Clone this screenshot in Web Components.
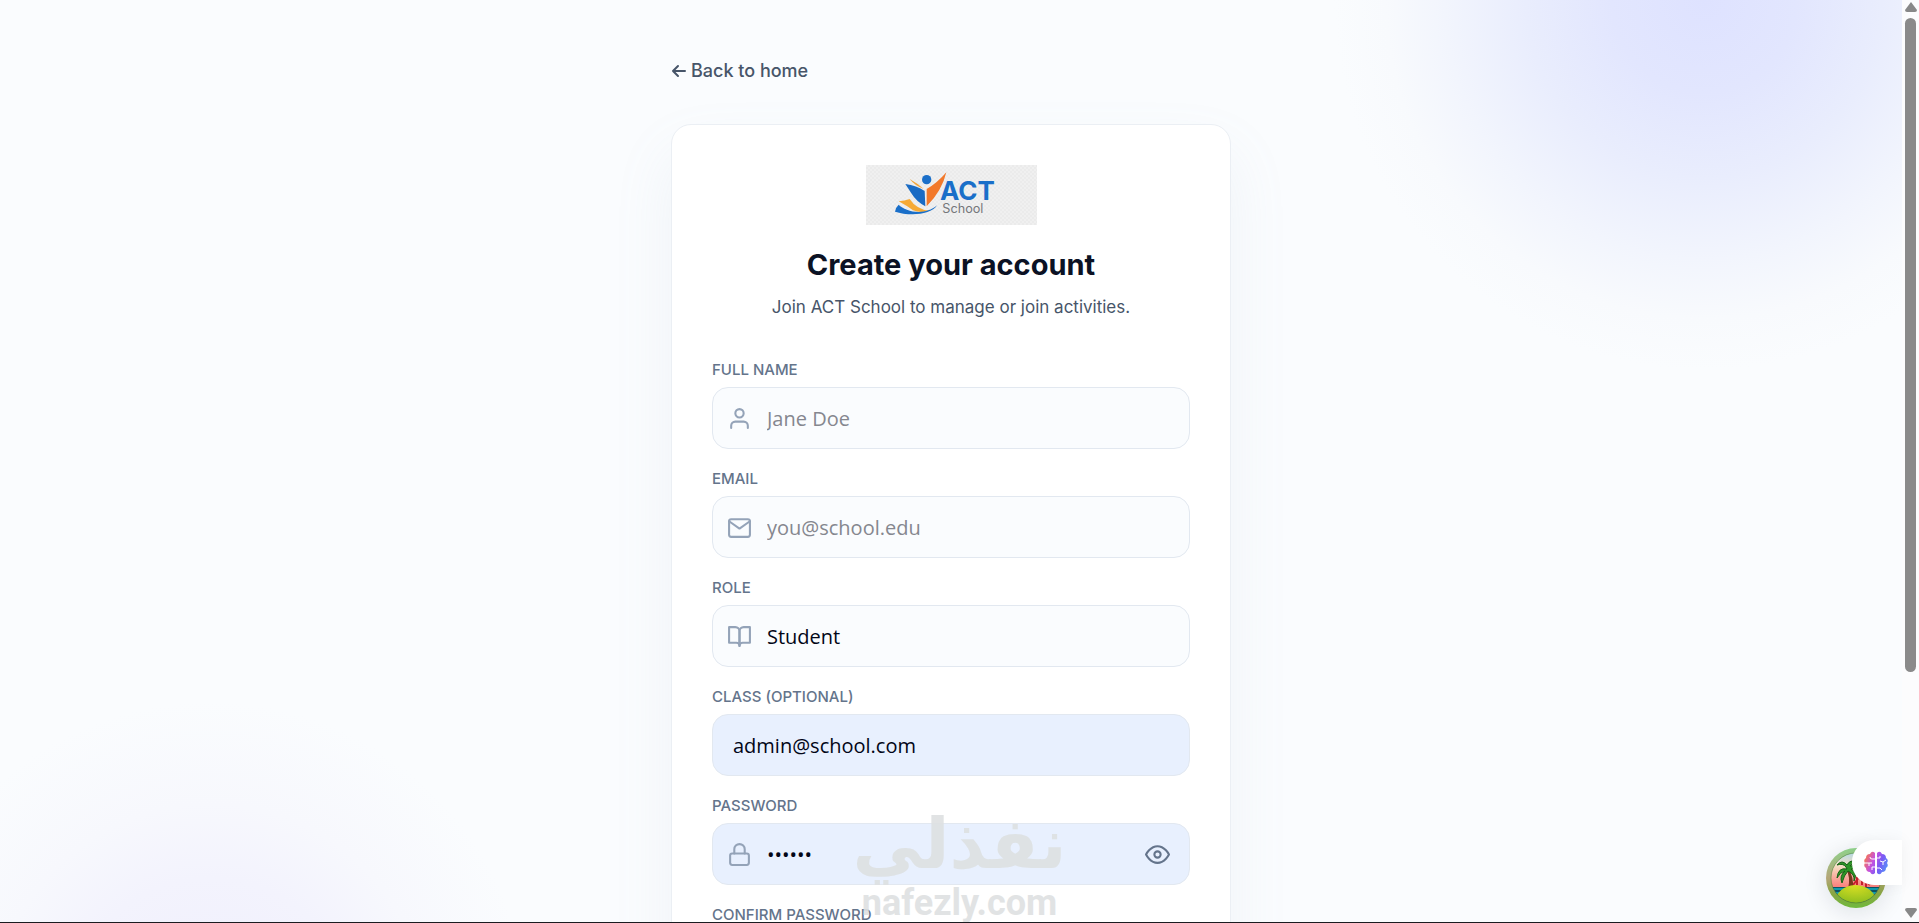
<!DOCTYPE html>
<html lang="en">
<head>
  <meta charset="utf-8">
  <meta name="viewport" content="width=device-width, initial-scale=1">
  <title>ACT School - Create your account</title>
  <style>
    body {
      margin: 0;
      font-family: Inter, "Open Sans", sans-serif;
      color: #0b1224;
    }
  </style>
</head>
<body>
  <app-shell>
    <back-link href="#home">Back to home</back-link>
    <auth-card>
      <school-logo slot="logo"></school-logo>
      <span slot="title">Create your account</span>
      <span slot="subtitle">Join ACT School to manage or join activities.</span>

      <form-field label="Full name" name="name" placeholder="Jane Doe">
        <field-icon slot="icon" name="user"></field-icon>
      </form-field>
      <form-field label="Email" name="email" type="email" placeholder="you@school.edu">
        <field-icon slot="icon" name="mail"></field-icon>
      </form-field>
      <form-field label="Role" name="role" type="select" options="Student,Teacher">
        <field-icon slot="icon" name="book"></field-icon>
      </form-field>
      <form-field label="Class (optional)" name="class" value="admin@school.com" filled></form-field>
      <form-field label="Password" name="password" type="password" value="secret" filled>
        <field-icon slot="icon" name="lock"></field-icon>
      </form-field>
      <form-field label="Confirm password" name="confirm" type="password">
        <field-icon slot="icon" name="lock"></field-icon>
      </form-field>
    </auth-card>

    <water-mark slot="overlay"></water-mark>
    <assistant-dock slot="overlay"></assistant-dock>
  </app-shell>

  <script>
    class AppShell extends HTMLElement {
      constructor() {
        super();
        this.attachShadow({ mode: 'open' });
        this.shadowRoot.innerHTML = `
          <style>
            :host {
              display: grid;
              grid-template-columns: minmax(0, 1fr) 17px;
              box-sizing: border-box;
              height: 100vh;
              border-bottom: 1px solid #1b1b20;
              position: relative;
              overflow: hidden;
              background: #fafcfe;
            }

            main {
              overflow-y: auto;
              scrollbar-width: none;
              background:
                radial-gradient(circle 370px at calc(100% - 198px) 0, #dee2ff 0%, #e2e6fe 25%, #e9edfd 48%, #f2f5fd 70%, #f8fafd 86%, rgba(250, 252, 254, 0) 100%),
                radial-gradient(circle 320px at 210px calc(100% + 100px), #efeefc 0%, #f3f3fd 45%, #f7f8fd 68%, rgba(250, 252, 254, 0) 100%);
            }

            .column {
              display: flex;
              flex-direction: column;
              gap: 40px;
              max-width: 560px;
              margin: 0 auto;
              padding: 58px 20px;
            }

            .scrollbar {
              display: flex;
              flex-direction: column;
              align-items: center;
              justify-content: space-between;
              background: #fcfcfd;
              padding: 2px 0 4px;
            }

            .scrollbar svg {
              width: 12px;
              height: 10px;
              fill: #888;
            }

            .track {
              flex: 1;
              margin: 6px 0;
            }

            .thumb {
              width: 11px;
              height: 74%;
              border-radius: 6px;
              background: #8a8a8a;
            }
          </style>
          <main>
            <div class="column"><slot></slot></div>
          </main>
          <div class="scrollbar" aria-hidden="true">
            <svg viewBox="0 0 12 10"><path d="M6 0 L12 8 Q12 10 10 10 H2 Q0 10 0 8 Z"/></svg>
            <div class="track"><div class="thumb"></div></div>
            <svg viewBox="0 0 12 10"><path d="M6 10 L12 2 Q12 0 10 0 H2 Q0 0 0 2 Z"/></svg>
          </div>
          <slot name="overlay"></slot>
        `;
      }
    }

    class BackLink extends HTMLElement {
      constructor() {
        super();
        this.attachShadow({ mode: 'open' });
        this.shadowRoot.innerHTML = `
          <style>
            :host {
              display: flex;
            }

            a {
              display: flex;
              align-items: center;
              gap: 4px;
              font-size: 18px;
              font-weight: 500;
              line-height: 26px;
              color: #475569;
              text-decoration: none;
            }

            svg {
              width: 16px;
              height: 16px;
              fill: none;
              stroke: currentColor;
              stroke-width: 2;
              stroke-linecap: round;
              stroke-linejoin: round;
            }
          </style>
          <a href="${this.getAttribute('href')}">
            <svg viewBox="0 0 16 16" aria-hidden="true"><path d="M14 8H2M7 3L2 8l5 5"/></svg>
            <slot></slot>
          </a>
        `;
      }
    }

    class SchoolLogo extends HTMLElement {
      constructor() {
        super();
        this.attachShadow({ mode: 'open' });
        this.shadowRoot.innerHTML = `
          <style>
            :host {
              display: block;
              width: 171px;
              height: 60px;
              background: repeating-conic-gradient(#ebebeb 0 25%, #f0f0f0 0 50%) 0 0 / 4px 4px;
            }

            svg {
              display: block;
              width: 100%;
              height: 100%;
            }
          </style>
          <svg viewBox="0 0 513 180" role="img" aria-label="ACT School">
            <circle cx="182" cy="44" r="14" fill="#1a6fc9"/>
            <path d="M241 22 Q228 78 182 124 L182 72 Q214 54 241 22 Z" fill="#f2792b"/>
            <path d="M118 57 Q152 62 176 78 L178 124 Q150 108 137 86 Z" fill="#1a6bc4"/>
            <path d="M131 42 Q156 56 172 71 Q148 63 131 42 Z" fill="#f3a63a"/>
            <path d="M98 109 Q116 108 131 102 Q152 134 190 137 Q164 145 141 136 Q122 122 98 109 Z" fill="#f6aa35"/>
            <path d="M98 119 C118 140 176 154 213 121 C196 150 130 154 87 140 Q88 128 98 119 Z" fill="#1a6fc9"/>
            <text x="222" y="105" font-family="Inter, sans-serif" font-weight="700" font-size="78" fill="#1a6fc9">ACT</text>
            <text x="229" y="145" font-family="Inter, sans-serif" font-size="38" fill="#75777b">School</text>
          </svg>
        `;
      }
    }

    class AuthCard extends HTMLElement {
      constructor() {
        super();
        this.attachShadow({ mode: 'open' });
        this.shadowRoot.innerHTML = `
          <style>
            :host {
              display: block;
              padding: 40px;
              background: #fff;
              border: 1px solid #ebeff4;
              border-radius: 20px;
              box-shadow: 0 30px 60px rgba(148, 163, 184, 0.1);
            }

            header {
              display: flex;
              flex-direction: column;
              align-items: center;
              text-align: center;
              margin-bottom: 39px;
            }

            h1 {
              margin: 20px 0 8px;
              font-size: 29px;
              font-weight: 700;
              line-height: 40px;
            }

            p {
              margin: 0;
              font-size: 17px;
              line-height: 28px;
              color: #475569;
            }

            form {
              display: flex;
              flex-direction: column;
              gap: 20px;
            }
          </style>
          <header>
            <slot name="logo"></slot>
            <h1><slot name="title"></slot></h1>
            <p><slot name="subtitle"></slot></p>
          </header>
          <form><slot></slot></form>
        `;
      }
    }

    const ICONS = {
      user: '<path d="M20 21v-2a4 4 0 0 0-4-4H8a4 4 0 0 0-4 4v2"/><circle cx="12" cy="7" r="4"/>',
      mail: '<rect x="2" y="4" width="20" height="17" rx="2"/><path d="M2 6l10 7 10-7"/>',
      book: '<path d="M2 3h6a4 4 0 0 1 4 4v14a3 3 0 0 0-3-3H2z"/><path d="M22 3h-6a4 4 0 0 0-4 4v14a3 3 0 0 1 3-3h7z"/>',
      lock: '<rect x="3" y="11" width="18" height="11" rx="2"/><path d="M7 11V7a5 5 0 0 1 10 0v4"/>',
      eye: '<path d="M1 12s4-8 11-8 11 8 11 8-4 8-11 8S1 12 1 12z"/><circle cx="12" cy="12" r="3"/>'
    };

    class FieldIcon extends HTMLElement {
      constructor() {
        super();
        this.attachShadow({ mode: 'open' });
        this.shadowRoot.innerHTML = `
          <style>
            :host {
              display: block;
              width: 25px;
              height: 25px;
            }

            svg {
              display: block;
              width: 100%;
              height: 100%;
              fill: none;
              stroke: currentColor;
              stroke-width: 2;
              stroke-linecap: round;
              stroke-linejoin: round;
            }
          </style>
          <svg viewBox="0 0 24 24" aria-hidden="true"></svg>
        `;
      }

      connectedCallback() {
        this.shadowRoot.querySelector('svg').innerHTML = ICONS[this.getAttribute('name')];
      }
    }

    class FormField extends HTMLElement {
      constructor() {
        super();
        this.attachShadow({ mode: 'open' });
      }

      connectedCallback() {
        const type = this.getAttribute('type') || 'text';
        const name = this.getAttribute('name');
        const value = this.getAttribute('value') || '';
        const placeholder = this.getAttribute('placeholder') || '';

        let control = `<input id="${name}" name="${name}" type="${type}" value="${value}" placeholder="${placeholder}">`;
        if (type === 'select') {
          const options = this.getAttribute('options').split(',');
          control = `<select id="${name}" name="${name}">${options.map(o => `<option>${o}</option>`).join('')}</select>`;
        }

        this.shadowRoot.innerHTML = `
          <style>
            :host {
              display: flex;
              flex-direction: column;
              gap: 8px;
            }

            label {
              font-size: 15px;
              font-weight: 500;
              line-height: 19px;
              text-transform: uppercase;
              color: #64748b;
            }

            .box {
              display: flex;
              align-items: center;
              box-sizing: border-box;
              height: 62px;
              padding: 0 19px 0 14px;
              gap: 15px;
              border: 1px solid #e2e8f0;
              border-radius: 16px;
              background: #fafcfe;
            }

            :host([filled]) .box {
              background: #e8f0fe;
            }

            .box.plain {
              padding-left: 20px;
            }

            ::slotted(field-icon) {
              flex: none;
              color: #94a3b8;
            }

            input,
            select {
              flex: 1;
              min-width: 0;
              height: 100%;
              margin: 0;
              padding: 0;
              border: 0;
              outline: 0;
              appearance: none;
              background: transparent;
              font-family: "Open Sans", sans-serif;
              font-size: 20px;
              color: #020617;
            }

            input::placeholder {
              color: #85878f;
            }

            button {
              display: flex;
              padding: 0;
              border: 0;
              background: none;
              color: #64748b;
            }
          </style>
          <label for="${name}">${this.getAttribute('label')}</label>
          <div class="box ${this.children.length ? '' : 'plain'}">
            <slot name="icon"></slot>
            ${control}
            ${type === 'password' ? '<button type="button" aria-label="Show password"><field-icon name="eye"></field-icon></button>' : ''}
          </div>
        `;
        this.input = this.shadowRoot.querySelector('input');
        const toggle = this.shadowRoot.querySelector('button');
        if (toggle) {
          toggle.addEventListener('click', () => {
            this.input.type = this.input.type === 'password' ? 'text' : 'password';
          });
        }
      }
    }

    // stamp that lies over the form, at the bottom of the window
    class WaterMark extends HTMLElement {
      constructor() {
        super();
        this.attachShadow({ mode: 'open' });
        this.shadowRoot.innerHTML = `
          <style>
            :host {
              position: absolute;
              left: 50%;
              bottom: 0;
              transform: translateX(-50%);
              display: flex;
              flex-direction: column;
              align-items: center;
              font-weight: 700;
              color: #dee1e2;
              opacity: 0.9;
              pointer-events: none;
            }

            .arabic {
              font-family: "DejaVu Sans", sans-serif;
              font-size: 70px;
              line-height: 80px;
            }

            .latin {
              font-family: Roboto, sans-serif;
              font-size: 36px;
              line-height: 38px;
            }
          </style>
          <span class="arabic" lang="ar" dir="rtl">نفذلي</span>
          <span class="latin">nafezly.com</span>
        `;
      }
    }

    class AssistantDock extends HTMLElement {
      constructor() {
        super();
        this.attachShadow({ mode: 'open' });
        this.shadowRoot.innerHTML = `
          <style>
            :host {
              position: absolute;
              right: 17px;
              bottom: 14px;
              width: 76px;
              height: 68px;
            }

            button {
              position: absolute;
              padding: 0;
              border: 0;
            }

            .island {
              left: 0;
              bottom: 0;
              width: 60px;
              height: 60px;
              border-radius: 50%;
              background: none;
              box-shadow: 0 4px 24px rgba(15, 23, 42, 0.12);
            }

            .brain {
              top: 0;
              right: 0;
              width: 50px;
              height: 45px;
              border-radius: 22px 0 0 22px;
              background: #fff;
              box-shadow: 0 0 16px rgba(15, 23, 42, 0.05);
            }

            svg {
              display: block;
            }

            .brain svg {
              margin-left: 12px;
            }
          </style>
          <button class="island" type="button" aria-label="Open devtools">
            <svg width="60" height="60" viewBox="0 0 60 60">
              <defs>
                <linearGradient id="ring" x1="0" y1="0" x2="0" y2="1">
                  <stop offset="0" stop-color="#8fd28c"/>
                  <stop offset="0.5" stop-color="#b5a578"/>
                  <stop offset="0.75" stop-color="#8aa544"/>
                  <stop offset="1" stop-color="#6fb93c"/>
                </linearGradient>
                <linearGradient id="sky" x1="0" y1="0" x2="0" y2="1">
                  <stop offset="0" stop-color="#a5dcf5"/>
                  <stop offset="0.3" stop-color="#f5dfc4"/>
                  <stop offset="0.65" stop-color="#fb7f7c"/>
                </linearGradient>
                <radialGradient id="sand" cx="0.5" cy="0" r="1">
                  <stop offset="0" stop-color="#dbe023"/>
                  <stop offset="1" stop-color="#79b51d"/>
                </radialGradient>
                <clipPath id="disc"><circle cx="30" cy="30" r="25"/></clipPath>
              </defs>
              <circle cx="30" cy="30" r="30" fill="url(#ring)"/>
              <g clip-path="url(#disc)">
                <rect width="60" height="60" fill="url(#sky)"/>
                <path d="M0 39H60V60H0Z" fill="#0c5365"/>
                <path d="M4 41h54M4 45h54M6 49h50" stroke="#139bac" stroke-width="2"/>
                <path d="M27 37l7-9 10 9M31 37v-8M36 37v-6M40 39v-9" fill="none" stroke="#c9202c" stroke-width="2"/>
                <path d="M20 21Q25 29 22 41H27Q28 29 22 20Z" fill="#7b3720"/>
                <path d="M8 55Q12 38 29 37Q48 38 51 55V60H8Z" fill="url(#sand)"/>
                <path d="M21 21Q12 19 11 30Q14 24 19 23Q13 28 16 35Q18 27 22 23Q29 26 28 33Q32 25 25 21Q31 20 34 24Q32 16 24 18Q27 13 31 14Q24 11 21 17Q16 11 11 17Q17 15 20 19Z" fill="#2e9627" stroke="#176216"/>
              </g>
              <circle cx="30" cy="30" r="25" fill="none" stroke="#3e8030" stroke-opacity="0.5"/>
            </svg>
          </button>
          <button class="brain" type="button" aria-label="Open assistant">
            <svg width="24" height="24" viewBox="0 0 24 24">
              <defs>
                <linearGradient id="mind" x1="0" y1="0.2" x2="1" y2="0.6">
                  <stop offset="0" stop-color="#fb7a43"/>
                  <stop offset="0.4" stop-color="#c552e0"/>
                  <stop offset="0.7" stop-color="#7a5bf5"/>
                  <stop offset="1" stop-color="#5a8cf8"/>
                </linearGradient>
              </defs>
              <path d="M11 2Q8 -1 6 3Q2 3 2 7Q-1 9 1 12Q-1 15 2 17Q2 21 6 21Q8 25 11 22ZM13 2Q16 -1 18 3Q22 3 22 7Q25 9 23 12Q25 15 22 17Q22 21 18 21Q16 25 13 22Z" fill="url(#mind)"/>
              <path d="M11 8H8Q6 8 6 6M1 12H8M11 16H8V19M5 12V15M13 7H16V5M13 17H16L18 19M22 9L19 11V14M19 11L16 10" fill="none" stroke="#fff" stroke-width="1"/>
            </svg>
          </button>
        `;
      }
    }

    customElements.define('field-icon', FieldIcon);
    customElements.define('form-field', FormField);
    customElements.define('back-link', BackLink);
    customElements.define('school-logo', SchoolLogo);
    customElements.define('auth-card', AuthCard);
    customElements.define('water-mark', WaterMark);
    customElements.define('assistant-dock', AssistantDock);
    customElements.define('app-shell', AppShell);
  </script>
</body>
</html>
